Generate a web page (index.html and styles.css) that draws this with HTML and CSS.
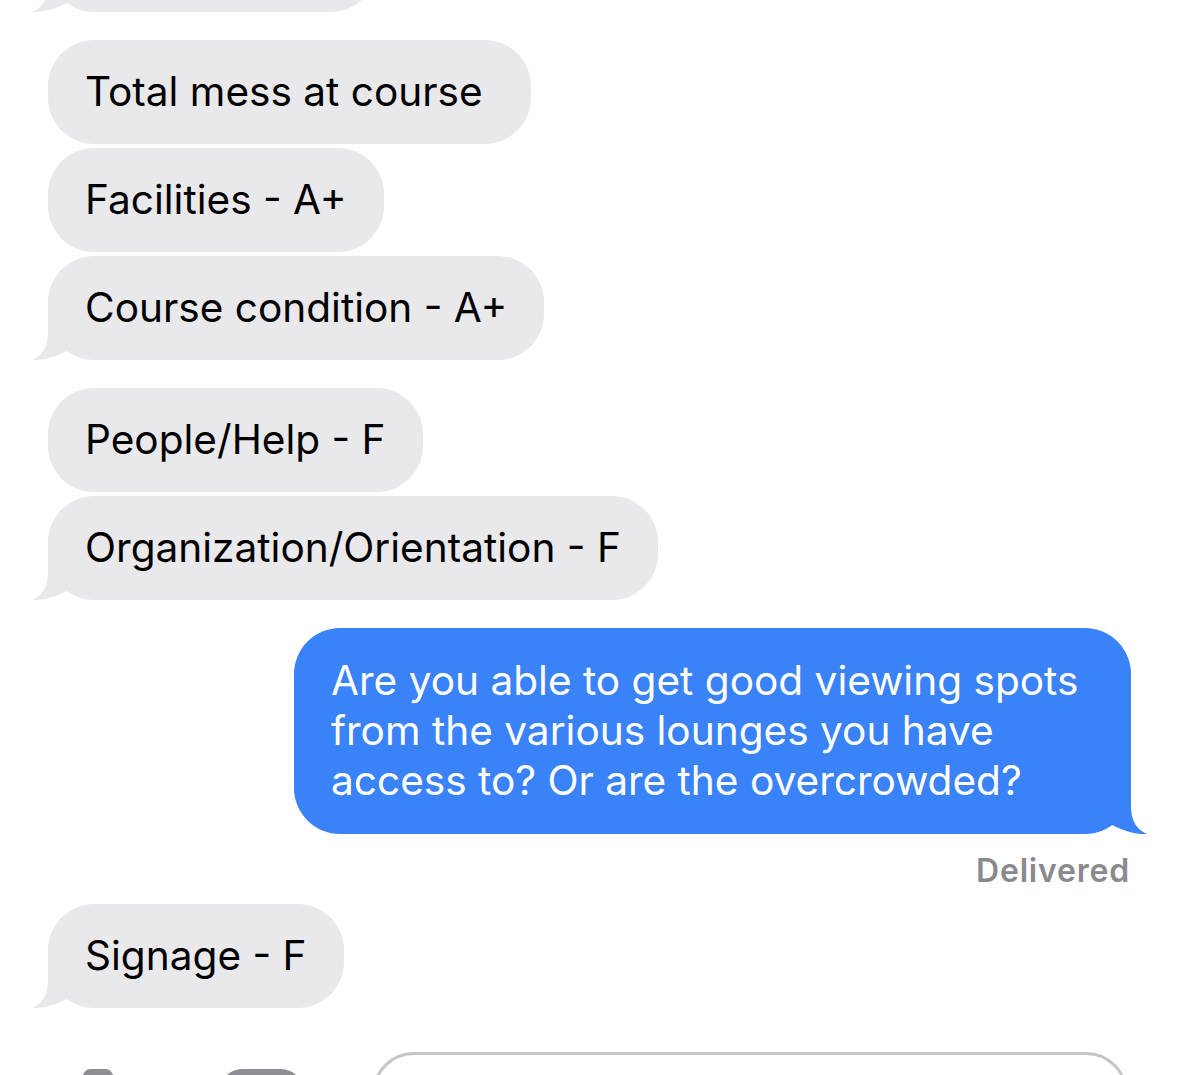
FILE: index.html
```html
<!DOCTYPE html>
<html lang="en">
<head>
<meta charset="utf-8">
<title>Messages</title>
<link rel="stylesheet" href="styles.css">
</head>
<body>
<main class="thread">
  <div class="bubble in cut"><svg class="tail" viewBox="0 0 62 46" width="62" height="46"><path d="M16,0 L16,18 C16,33 10,42 0,46 C9,46.6 21,44 35,37 L62,37 L62,0 Z"/></svg></div>
  <div class="bubble in group">Total mess at course&nbsp;</div>
  <div class="bubble in">Facilities - A+</div>
  <div class="bubble in">Course condition - A+<svg class="tail" viewBox="0 0 62 46" width="62" height="46"><path d="M16,0 L16,18 C16,33 10,42 0,46 C9,46.6 21,44 35,37 L62,37 L62,0 Z"/></svg></div>
  <div class="bubble in group">People/Help - F</div>
  <div class="bubble in">Organization/Orientation - F<svg class="tail" viewBox="0 0 62 46" width="62" height="46"><path d="M16,0 L16,18 C16,33 10,42 0,46 C9,46.6 21,44 35,37 L62,37 L62,0 Z"/></svg></div>
  <div class="bubble out group">Are you able to get good viewing spots from the various lounges you have access to? Or are the overcrowded?<svg class="tail" viewBox="0 0 62 46" width="62" height="46"><path d="M16,0 L16,18 C16,33 10,42 0,46 C9,46.6 21,44 35,37 L62,37 L62,0 Z"/></svg></div>
  <div class="status">Delivered</div>
  <div class="bubble in">Signage - F<svg class="tail" viewBox="0 0 62 46" width="62" height="46"><path d="M16,0 L16,18 C16,33 10,42 0,46 C9,46.6 21,44 35,37 L62,37 L62,0 Z"/></svg></div>
</main>
<footer class="composer">
  <svg class="camera" viewBox="0 0 70 50" width="70" height="50"><path d="M17,10 L22,2.5 Q23.5,0 27,0 L43,0 Q46.5,0 48,2.5 L53,10 Z"/><rect x="0" y="9" width="70" height="41" rx="8"/></svg>
  <svg class="appstore" viewBox="0 0 83 50" width="83" height="50"><rect x="0" y="0" width="83" height="70" rx="22"/></svg>
  <div class="field"></div>
</footer>
</body>
</html>
```
FILE: styles.css
```css
html, body {
  margin: 0;
  padding: 0;
  background: #ffffff;
  overflow: hidden;
}

body {
  font-family: Inter, "Noto Sans", "Liberation Sans", sans-serif;
  color: #000000;
}

.thread {
  display: flex;
  flex-direction: column;
  align-items: flex-start;
  padding: 0 48px;
}

.bubble {
  position: relative;
  isolation: isolate;
  box-sizing: border-box;
  margin-top: 4px;
  padding: 27px 37px;
  font-size: 40.6px;
  line-height: 50px;
  border-radius: 46px;
  white-space: nowrap;
}

.bubble.group {
  margin-top: 28px;
}

.bubble.in {
  background: #e9e9eb;
}

.bubble.in .tail {
  fill: #e9e9eb;
}

.bubble.cut {
  margin-top: -92px;
  width: 329px;
  height: 104px;
}

.bubble.out {
  align-self: flex-end;
  max-width: 837px;
  padding: 28px 37px;
  white-space: normal;
  background: #3a82f7;
  color: #ffffff;
}

.bubble.out .tail {
  fill: #3a82f7;
  left: auto;
  right: -16px;
  transform: scaleX(-1);
}

.tail {
  position: absolute;
  z-index: -1;
  left: -16px;
  bottom: 0;
  display: block;
}

.status {
  align-self: flex-end;
  margin: 19px 1px 11px 0;
  font-size: 32px;
  line-height: 36px;
  font-weight: 600;
  letter-spacing: 0.8px;
  color: #8a8a8e;
}

.composer {
  display: flex;
  align-items: flex-start;
  margin-top: 44px;
  padding: 0 51px 0 63px;
  height: 23px;
  overflow: hidden;
}

.camera,
.appstore {
  flex: none;
  margin-top: 17px;
  fill: #8e8e93;
}

.appstore {
  margin-left: 87px;
}

.field {
  flex: 1;
  margin-left: 69px;
  box-sizing: border-box;
  height: 84px;
  border: 3px solid #c6c6c8;
  border-radius: 42px;
}
```
